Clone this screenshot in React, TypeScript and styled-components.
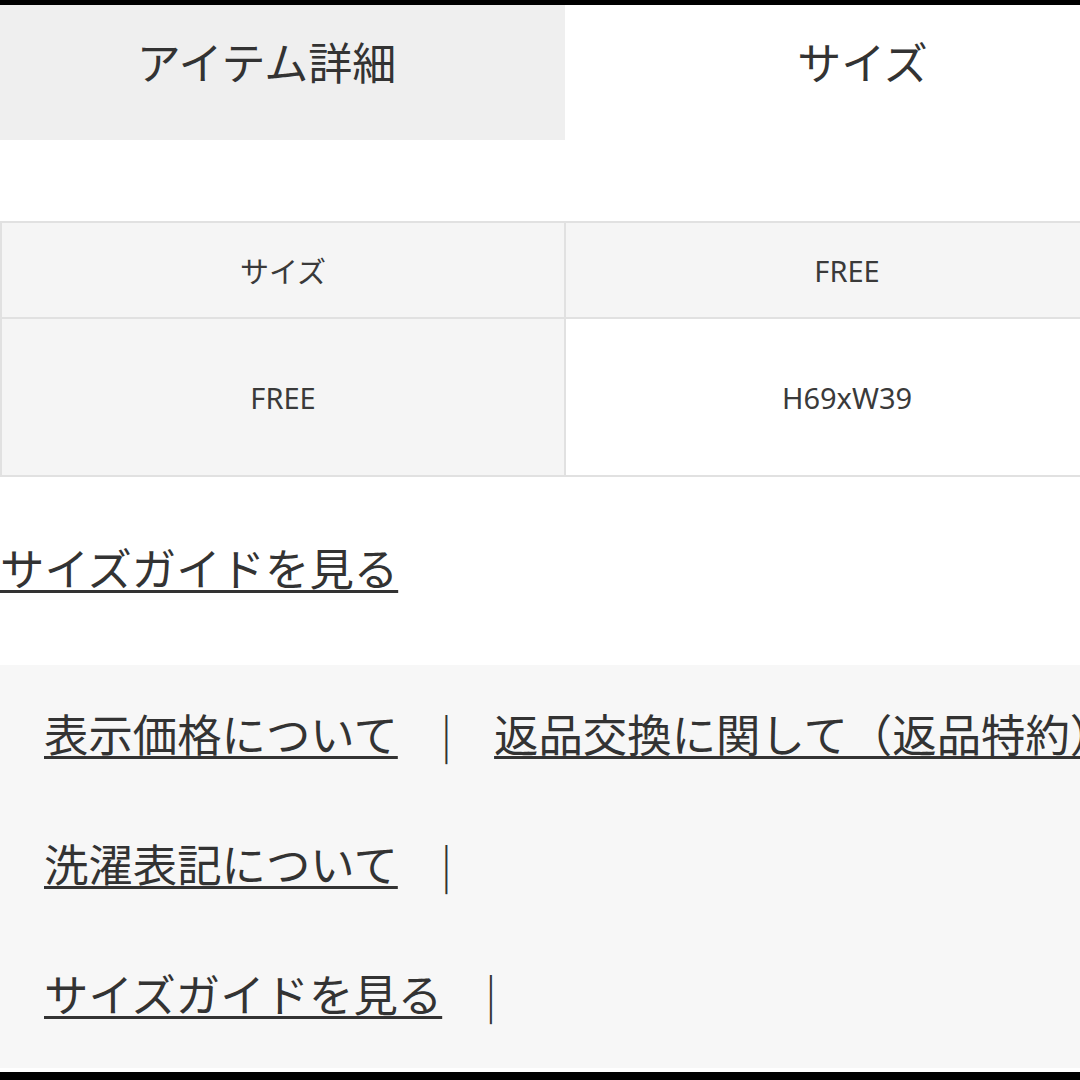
import styled, { createGlobalStyle } from 'styled-components';

const GlobalStyle = createGlobalStyle`
  html, body {
    margin: 0;
    padding: 0;
    background: #ffffff;
  }
  body {
    font-family: 'Noto Sans CJK JP', 'Noto Sans', sans-serif;
    color: #333333;
  }
`;

const links = [
  ['表示価格について', '返品交換に関して（返品特約）'],
  ['洗濯表記について'],
  ['サイズガイドを見る'],
];

export default function App() {
  return (
    <Frame>
      <GlobalStyle />
      <Tabs>
        <Tab $active={false}>アイテム詳細</Tab>
        <Tab $active>サイズ</Tab>
      </Tabs>

      <SizeTable>
        <tbody>
          <tr>
            <Cell $shade>サイズ</Cell>
            <Cell $shade $latin>FREE</Cell>
          </tr>
          <tr className='measure'>
            <Cell $shade $latin>FREE</Cell>
            <Cell $latin>H69xW39</Cell>
          </tr>
        </tbody>
      </SizeTable>

      <GuideLink href='#'>サイズガイドを見る</GuideLink>

      <InfoBox>
        {links.map((row, i) => (
          <InfoRow key={i}>
            {row.map((label, j) => (
              <span key={label}>
                {j > 0 && <Separator>|</Separator>}
                <InfoLink href='#'>{label}</InfoLink>
              </span>
            ))}
            {row.length === 1 && <Separator>|</Separator>}
          </InfoRow>
        ))}
      </InfoBox>
    </Frame>
  );
}

const Frame = styled.div`
  box-sizing: border-box;
  width: 1080px;
  height: 1080px;
  overflow: hidden;
  border-top: 5px solid #000;
  border-bottom: 8px solid #000;
  display: flex;
  flex-direction: column;
`;

const Tabs = styled.div`
  display: flex;
  width: 1130px;
  height: 135px;
  flex-shrink: 0;
`;

const Tab = styled.div<{ $active: boolean }>`
  width: 565px;
  display: flex;
  align-items: center;
  justify-content: center;
  box-sizing: border-box;
  padding-bottom: 24px;
  padding-right: ${(p) => (p.$active ? '0' : '32px')};
  padding-left: ${(p) => (p.$active ? '30px' : '0')};
  background: ${(p) => (p.$active ? '#ffffff' : '#efefef')};
  font-size: 44px;
  color: #333;
  line-height: 1;
`;

const SizeTable = styled.table`
  margin-top: 81px;
  width: 1130px;
  border-collapse: collapse;
  table-layout: fixed;
  flex-shrink: 0;
  & tr {
    height: 96px;
  }
  & tr.measure {
    height: 158px;
  }
`;

const Cell = styled.td<{ $shade?: boolean; $latin?: boolean }>`
  border: 2px solid #e1e1e1;
  background: ${(p) => (p.$shade ? '#f5f5f5' : '#ffffff')};
  text-align: center;
  vertical-align: middle;
  padding: 0;
  font-size: 29px;
  color: #3a3a3a;
  font-family: ${(p) =>
    p.$latin ? "'Noto Sans', sans-serif" : "'Noto Sans CJK JP', sans-serif"};
`;

const GuideLink = styled.a`
  display: block;
  margin-top: 60px;
  align-self: flex-start;
  font-size: 44.4px;
  line-height: 60px;
  color: #333;
  text-decoration: underline;
  text-decoration-thickness: 3px;
  text-underline-offset: 4px;
`;

const InfoBox = styled.div`
  margin-top: 68px;
  height: 403px;
  box-sizing: border-box;
  background: #f7f7f7;
  padding: 38px 0 0 44px;
  display: flex;
  flex-direction: column;
  gap: 70px;
  flex-shrink: 0;
`;

const InfoRow = styled.div`
  height: 60px;
  line-height: 60px;
  font-size: 44.4px;
  white-space: nowrap;
`;

const InfoLink = styled.a`
  color: #333;
  text-decoration: underline;
  text-decoration-thickness: 3px;
  text-underline-offset: 4px;
`;

const Separator = styled.span`
  display: inline-block;
  margin: 0 42px 0 43px;
  font-weight: 300;
  color: #333;
`;
